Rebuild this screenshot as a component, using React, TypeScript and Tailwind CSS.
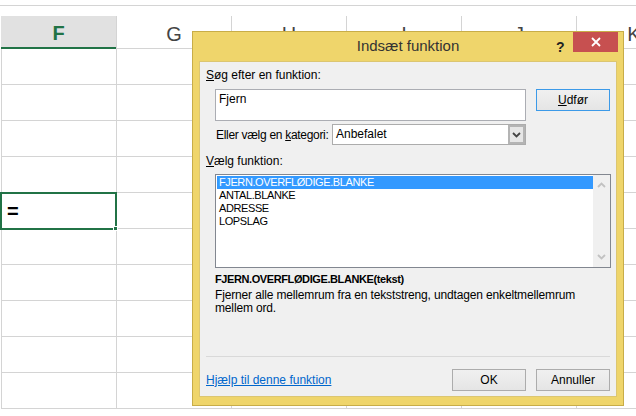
import React from 'react';

const COLS = ['F', 'G', 'H', 'I', 'J', 'K'];
const ROWS = Array.from({ length: 10 });
const FUNCS = ['FJERN.OVERFLØDIGE.BLANKE', 'ANTAL.BLANKE', 'ADRESSE', 'LOPSLAG'];

// small chevron used in the combo and the scrollbar
const Chevron = ({ up = false, color = '#444' }: { up?: boolean; color?: string }) => (
  <svg width="9" height="6" viewBox="0 0 9 6" className={up ? 'rotate-180' : ''}>
    <path d="M1 1 L4.5 4.5 L8 1" fill="none" stroke={color} strokeWidth="1.8" />
  </svg>
);

const Sheet = () => (
  <div className="flex flex-col">
    <div className="h-[5px]" />
    <div className="h-px bg-[#d4d4d4]" />
    <div className="h-[10px]" />
    {/* column headers */}
    <div className="flex h-[33px] pl-px">
      {COLS.map((c, i) => (
        <div
          key={c}
          className={
            i === 0
              ? 'flex w-[115px] shrink-0 items-center justify-center border-b-2 border-[#217346] bg-[#e1e1e1] pt-[3px] text-[20px] font-bold text-[#217346]'
              : 'flex w-[115px] shrink-0 items-center justify-center border-b border-l border-[#d4d4d4] pt-[3px] text-[20px] text-[#444]'
          }
        >
          {c}
        </div>
      ))}
    </div>
    {ROWS.map((_, r) => (
      <div key={r} className="flex h-[36px] pl-px">
        {COLS.map((c) => (
          <div key={c} className="w-[115px] shrink-0 border-b border-l border-[#d4d4d4]" />
        ))}
      </div>
    ))}
  </div>
);

const Btn = ({ children, focus = false }: { children: React.ReactNode; focus?: boolean }) => (
  <div
    className={
      focus
        ? 'flex h-[22px] w-[74px] items-center justify-center border border-[#3c9ae8] bg-gradient-to-b from-[#f0f0f0] to-[#e5e5e5] text-[12px]'
        : 'flex h-[22px] w-[74px] items-center justify-center border border-[#acacac] bg-gradient-to-b from-[#f0f0f0] to-[#e5e5e5] text-[12px]'
    }
  >
    {children}
  </div>
);

const Dialog = () => (
  <div className="absolute left-[192px] top-[31px] flex h-[375px] w-[432px] flex-col border border-[#c8ad48] bg-[#efd56b] font-['Liberation_Sans',Arial,sans-serif] text-black">
    <div className="relative flex h-[29px] items-center justify-center">
      <span className="text-[15px] text-[#333]">Indsæt funktion</span>
      <span className="absolute left-[363px] top-[5px] text-[14px] font-bold text-[#222]">?</span>
      <div className="absolute right-[5px] top-0 flex h-[20px] w-[45px] items-center justify-center bg-[#c75050]">
        <svg width="10" height="10" viewBox="0 0 10 10">
          <path d="M1 1 L9 9 M9 1 L1 9" stroke="#fff" strokeWidth="1.8" />
        </svg>
      </div>
    </div>

    <div className="mx-[6px] flex h-[336px] flex-col border border-[#dcc671] bg-[#f0f0f0] px-[6px] pt-[6px] text-[12px]">
      <div className="h-[14px] leading-[14px]">
        <span className="underline">S</span>øg efter en funktion:
      </div>

      <div className="ml-[9px] mt-[7px] flex items-start">
        <div className="h-[32px] w-[311px] border border-[#abadb3] bg-white px-[3px] pt-[2px] leading-[14px]">Fjern</div>
        <div className="ml-[10px]">
          <Btn focus>
            <span className="underline">U</span>dfør
          </Btn>
        </div>
      </div>

      <div className="mt-[3px] flex h-[21px] items-center">
        <span className="ml-[10px] w-[116px] shrink-0 whitespace-nowrap tracking-[-0.3px]">
          Eller vælg en <span className="underline">k</span>ategori:
        </span>
        <div className="flex h-[21px] w-[194px] items-stretch border border-[#acacac] bg-white">
          <span className="flex-1 pl-[3px] leading-[19px]">Anbefalet</span>
          <div className="flex w-[17px] items-center justify-center border-2 border-[#b4b4b4] bg-[#e6e6e6]">
            <Chevron />
          </div>
        </div>
      </div>

      <div className="mt-[9px] h-[14px] leading-[14px]">
        <span className="underline">V</span>ælg funktion:
      </div>

      <div className="ml-[9px] mt-[6px] flex h-[94px] w-[396px] border border-[#828790] bg-white">
        <div className="flex-1 pl-px pt-px">
          {FUNCS.map((f, i) => (
            <div
              key={f}
              className={
                i === 0
                  ? 'h-[13px] bg-[#3399ff] pl-[2px] text-[11px] leading-[13px] tracking-[-0.4px] text-white'
                  : 'h-[13px] pl-[2px] text-[11px] leading-[13px] tracking-[-0.4px]'
              }
            >
              {f}
            </div>
          ))}
        </div>
        <div className="flex w-[17px] flex-col items-center justify-between bg-[#f0f0f0] py-[7px]">
          <Chevron up color="#c2c2c2" />
          <Chevron color="#c2c2c2" />
        </div>
      </div>

      <div className="ml-[9px] mt-[4px] h-[14px] text-[11px] font-bold leading-[14px] tracking-[-0.4px]">
        FJERN.OVERFLØDIGE.BLANKE(tekst)
      </div>
      <div className="ml-[9px] mt-[3px] leading-[13px] tracking-[-0.15px]">
        Fjerner alle mellemrum fra en tekststreng, undtagen enkeltmellemrum
        <br />
        mellem ord.
      </div>

      <div className="mt-[41px] h-px bg-[#d9d9d9]" />

      <div className="mt-[12px] flex h-[21px] items-center">
        <span className="flex-1 text-[#0066cc] underline">Hjælp til denne funktion</span>
        <Btn>OK</Btn>
        <div className="ml-[10px]">
          <Btn>Annuller</Btn>
        </div>
      </div>
    </div>
  </div>
);

export default function App() {
  return (
    <div className="relative h-[416px] w-[636px] overflow-hidden bg-white font-['Liberation_Sans',Arial,sans-serif]">
      <Sheet />
      {/* selected cell */}
      <div className="absolute left-0 top-[192px] flex h-[38px] w-[117px] items-center border-2 border-[#217346] pl-[5px] text-[20px] font-bold leading-none">
        =
      </div>
      <div className="absolute left-[113px] top-[226px] h-[5px] w-[5px] border border-white bg-[#217346]" />
      <Dialog />
    </div>
  );
}
